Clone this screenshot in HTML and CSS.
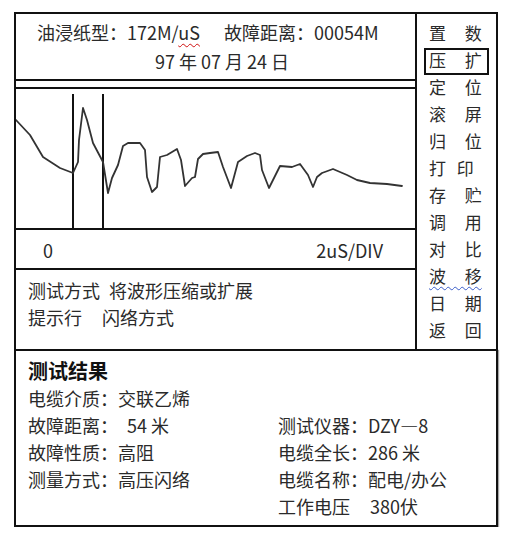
FILE: index.html
```html
<!DOCTYPE html>
<html lang="zh-CN">
<head>
<meta charset="utf-8">
<title>电缆故障测试</title>
<link rel="stylesheet" href="styles.css">
</head>
<body>
<div class="frame">
  <div class="top">
    <div class="left">
      <div class="header">
        <div class="hline"><span class="hcell">油浸纸型：172M/<span class="wavy-red">uS</span></span><span>故障距离：00054M</span></div>
        <div class="hdate">97 年 07 月 24 日</div>
      </div>
      <div class="gap"></div>
      <div class="wave">
        <svg class="wave-svg" width="399" height="139" viewBox="16 89 399 139" xmlns="http://www.w3.org/2000/svg">
          <line x1="73" y1="94" x2="73" y2="228" stroke="#111" stroke-width="2"/>
          <line x1="103" y1="94" x2="103" y2="228" stroke="#111" stroke-width="2"/>
          <polyline fill="none" stroke="#333" stroke-width="1.8" stroke-linejoin="round" stroke-linecap="round"
            points="16,120 30,135 43,157 60,168 73,173 78,162 79,140 83,108 87,120 93,143 103,162 108,193 112,178 118,165 123,146 128,143 140,143 145,150 147,177 152,192 157,187 160,157 167,155 177,149 181,160 185,186 192,178 195,177 198,159 203,154 210,153 218,152 223,167 231,188 238,162 247,156 255,153 260,155 262,170 269,188 280,166 292,167 300,164 308,175 313,187 317,177 322,173 333,169 347,175 357,180 370,183 387,184 402,186"/>
        </svg>
      </div>
      <div class="axis"><span>0</span><span>2uS/DIV</span></div>
      <div class="prompt">
        <div>测试方式<span class="pgap1">将波形压缩或扩展</span></div>
        <div>提示行<span class="pgap">闪络方式</span></div>
      </div>
    </div>
    <div class="menu">
      <div class="mi">置 数</div>
      <div class="mi sel">压 扩</div>
      <div class="mi">定 位</div>
      <div class="mi">滚 屏</div>
      <div class="mi">归 位</div>
      <div class="mi tight">打 印</div>
      <div class="mi">存 贮</div>
      <div class="mi">调 用</div>
      <div class="mi">对 比</div>
      <div class="mi"><span class="wavy-blue">波 移</span></div>
      <div class="mi">日 期</div>
      <div class="mi">返 回</div>
    </div>
  </div>
  <div class="results">
    <div class="title">测试结果</div>
    <div class="grid">
      <div>电缆介质：交联乙烯</div>
      <div></div>
      <div>故障距离：<span class="g1">54 米</span></div>
      <div>测试仪器：DZY—8</div>
      <div>故障性质：高阻</div>
      <div>电缆全长：286 米</div>
      <div>测量方式：高压闪络</div>
      <div>电缆名称：配电/办公</div>
      <div></div>
      <div>工作电压<span class="g2">380伏</span></div>
    </div>
  </div>
</div>
</body>
</html>
```
FILE: styles.css
```css
html, body {
  margin: 0;
  padding: 0;
  background: #fff;
}
body {
  font-family: "Noto Sans CJK SC", sans-serif;
  color: #2a2a2a;
}
.frame {
  margin: 12px 0 0 14px;
  width: 484px;
}
.top {
  display: flex;
  height: 337px;
  box-sizing: border-box;
  border: 2px solid #111;
  border-bottom: none;
}
.left {
  flex: 1;
  display: flex;
  flex-direction: column;
  min-width: 0;
}
.header {
  height: 67px;
  box-sizing: border-box;
  border-bottom: 2px solid #111;
  padding: 4px 0 0 21px;
  font-size: 18px;
  line-height: 29px;
}
.hline {
  display: flex;
  white-space: nowrap;
}
.hcell {
  display: inline-block;
  width: 187px;
}
.hdate {
  padding-left: 118px;
  white-space: nowrap;
}
.wavy-red {
  text-decoration: underline wavy #d01010;
  text-decoration-thickness: 1px;
  text-underline-offset: 3px;
}
.gap {
  height: 6px;
}
.wave {
  height: 143px;
  box-sizing: border-box;
  border-top: 2px solid #111;
  border-bottom: 2px solid #111;
}
.wave-svg {
  display: block;
}
.axis {
  height: 40px;
  box-sizing: border-box;
  border-bottom: 2px solid #111;
  display: flex;
  justify-content: space-between;
  align-items: center;
  padding: 2px 32px 0 27px;
  font-size: 18px;
}
.prompt {
  flex: 1;
  padding: 7px 0 0 12px;
  font-size: 18px;
  line-height: 27px;
  white-space: nowrap;
}
.pgap1 {
  margin-left: 9px;
}
.pgap {
  margin-left: 20px;
}
.menu {
  width: 81px;
  box-sizing: border-box;
  border-left: 2px solid #111;
  padding: 5px 0 0 12px;
  font-size: 17px;
  line-height: 27px;
}
.mi {
  height: 27px;
  white-space: pre;
  word-spacing: 15px;
}
.mi.tight {
  word-spacing: 7px;
}
.mi.sel {
  box-sizing: border-box;
  border: 2px solid #111;
  margin: 2px 7px -2px -5px;
  padding-left: 3px;
  line-height: 19px;
}
.wavy-blue {
  text-decoration: underline wavy #3a5cc8;
  text-decoration-thickness: 1px;
  text-underline-offset: 3px;
}
.results {
  height: 178px;
  box-sizing: border-box;
  border: 2px solid #111;
  padding: 6px 0 0 12px;
  box-shadow: 1px 1px 1px rgba(0, 0, 0, 0.35);
}
.title {
  font-size: 20px;
  font-weight: bold;
  line-height: 28px;
  color: #111;
}
.grid {
  display: grid;
  grid-template-columns: 250px 1fr;
  grid-auto-rows: 27px;
  line-height: 27px;
  font-size: 18px;
  white-space: nowrap;
}
.g1 {
  margin-left: 9px;
}
.g2 {
  margin-left: 20px;
}
```
